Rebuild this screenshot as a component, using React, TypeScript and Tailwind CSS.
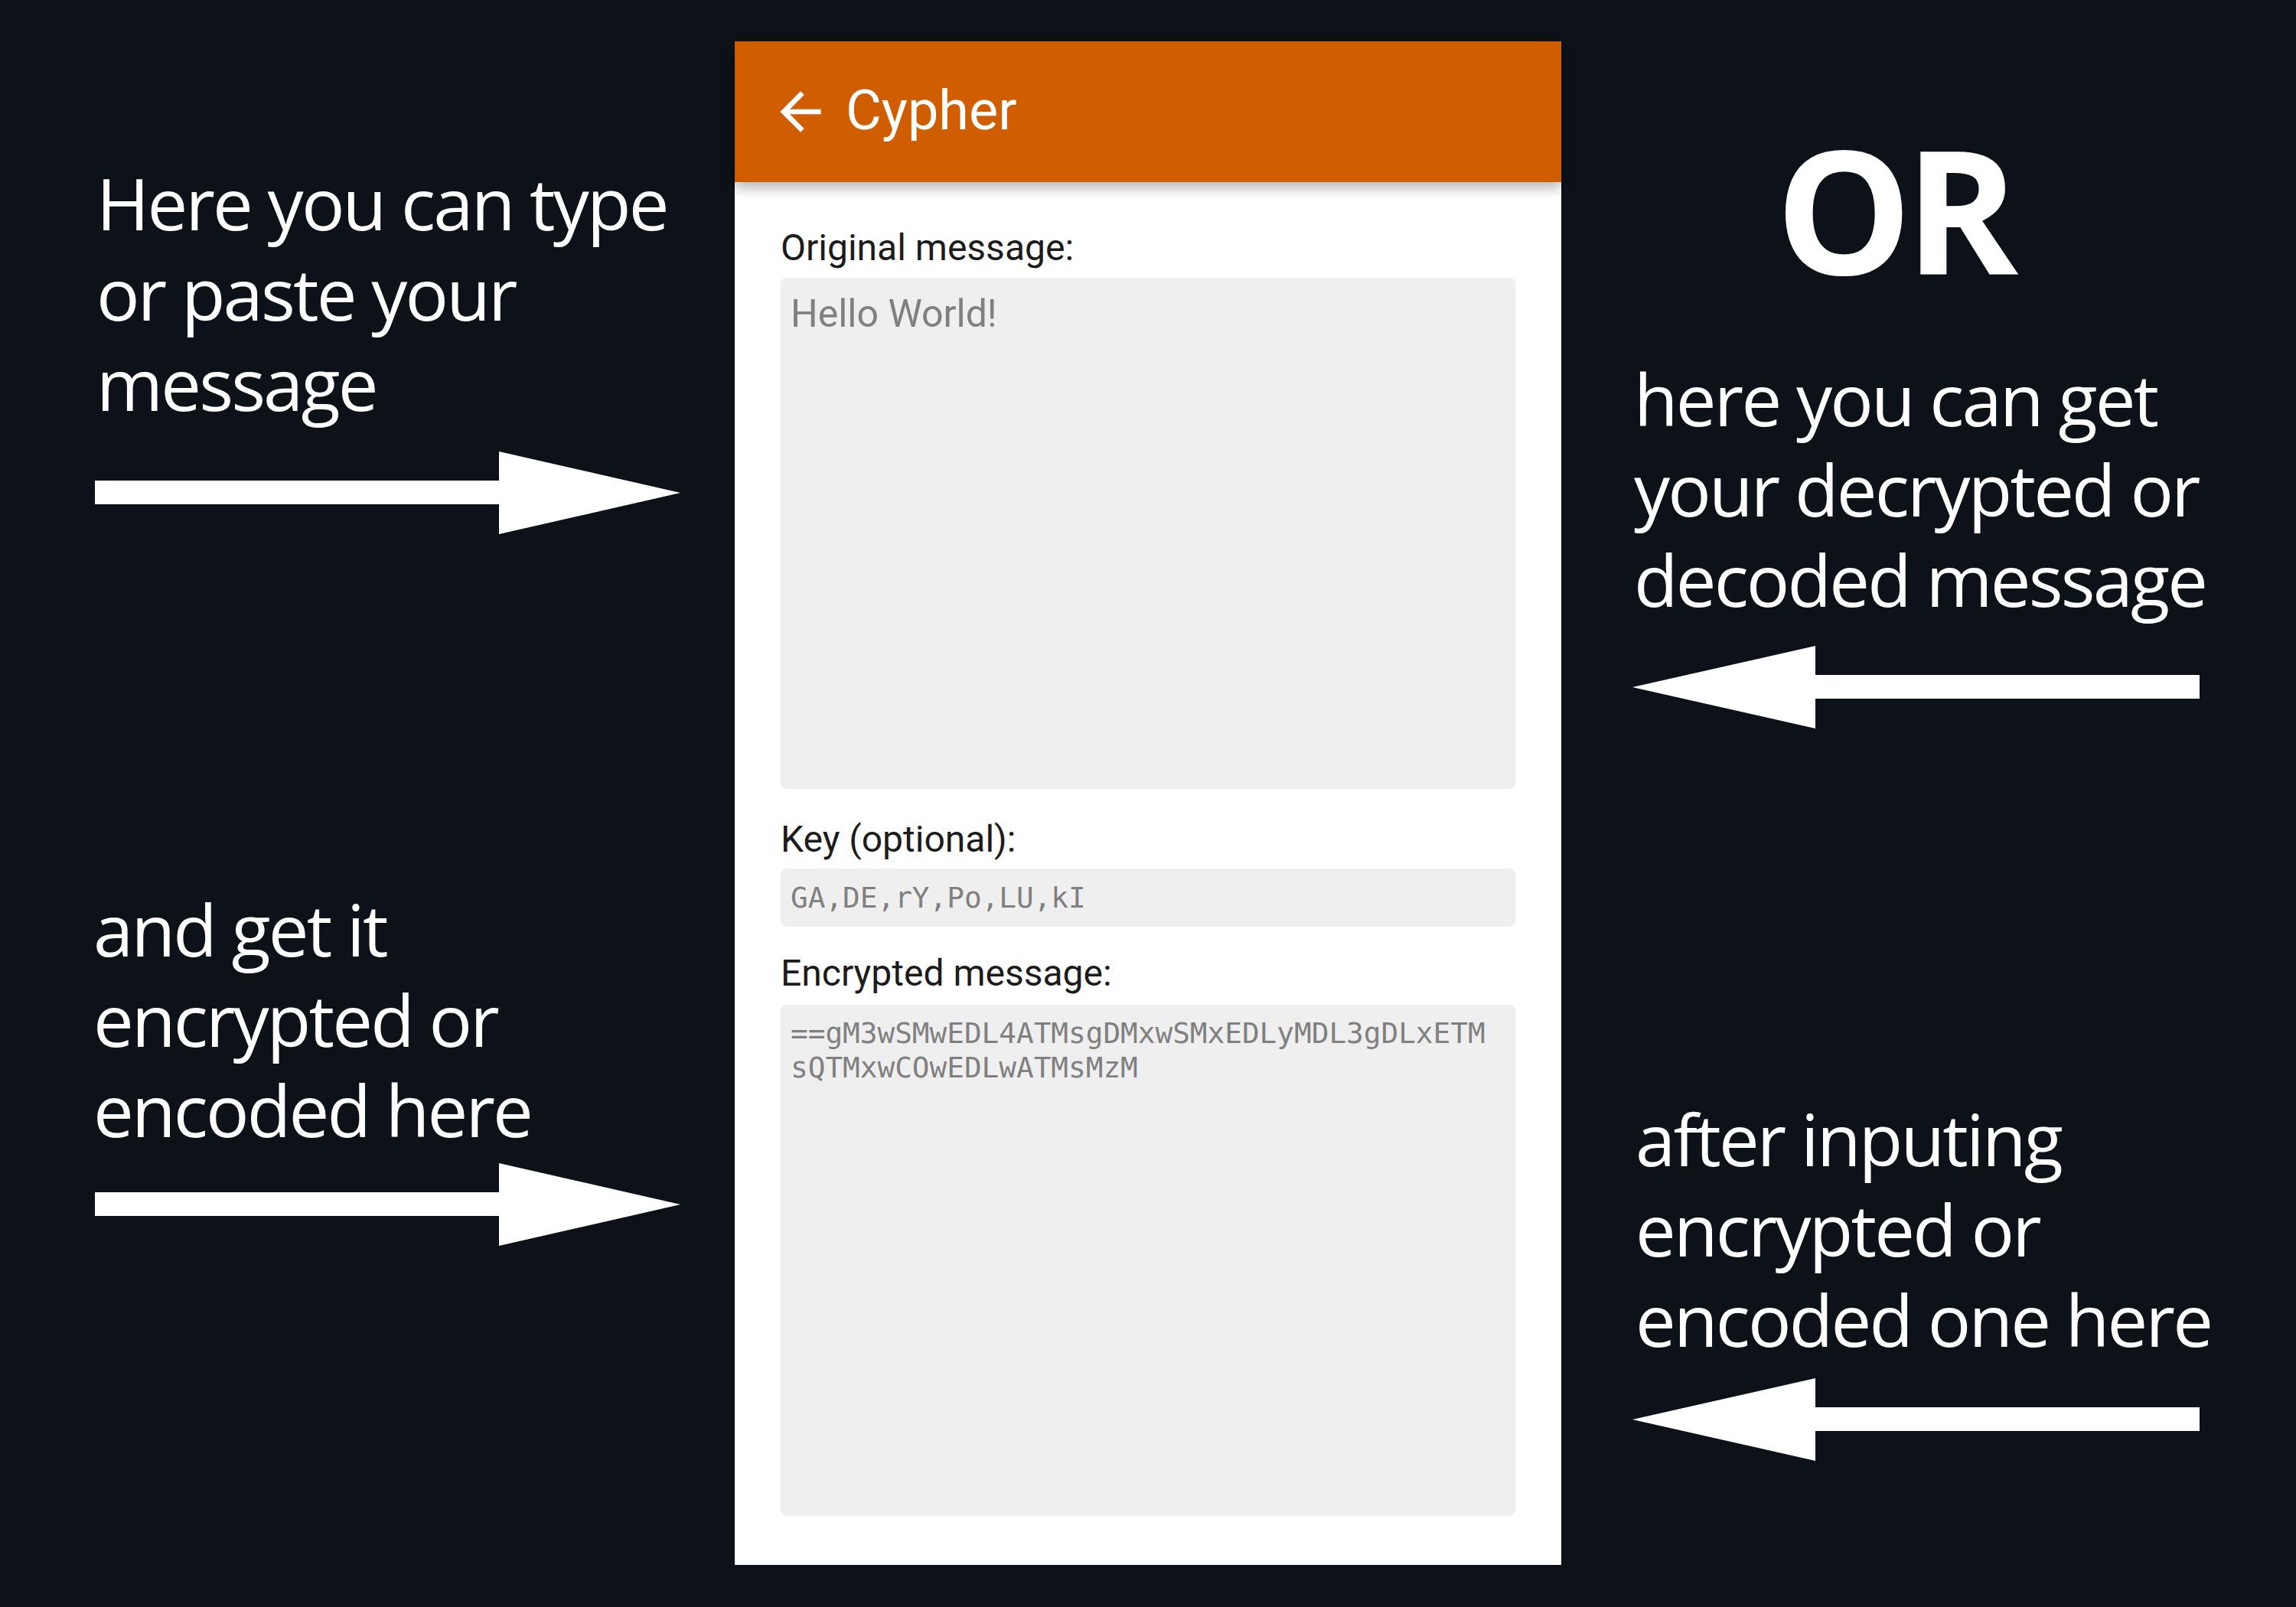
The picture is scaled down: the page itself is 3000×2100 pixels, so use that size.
import React from "react";

function ArrowRight() {
  return (
    <svg width="765" height="108" viewBox="0 0 765 108" className="block">
      <polygon points="0,38 528,38 528,0 765,54 528,108 528,69 0,69" fill="#ffffff" />
    </svg>
  );
}

function ArrowLeft() {
  return (
    <svg width="741" height="108" viewBox="0 0 741 108" className="block">
      <polygon points="0,54 239,0 239,38 741,38 741,69 239,69 239,108" fill="#ffffff" />
    </svg>
  );
}

function Note({ lines }: { lines: string[] }) {
  return (
    <div className="text-white font-['Open_Sans',sans-serif] text-[94px] leading-[118px] tracking-[-0.03em] whitespace-nowrap">
      {lines.map((l) => (
        <div key={l}>{l}</div>
      ))}
    </div>
  );
}

export default function App() {
  return (
    <div className="w-[3000px] h-[2100px] bg-[#0d1118] flex overflow-hidden">
      {/* Left annotations */}
      <div className="w-[960px] flex flex-col pl-[122px]">
        <div className="mt-[206px] ml-[4px]">
          <Note lines={["Here you can type", "or paste your", "message"]} />
        </div>
        <div className="mt-[30px] ml-[2px]">
          <ArrowRight />
        </div>
        <div className="mt-[457px]">
          <Note lines={["and get it", "encrypted or", "encoded here"]} />
        </div>
        <div className="mt-[11px] ml-[2px]">
          <ArrowRight />
        </div>
      </div>

      {/* Phone */}
      <div className="w-[1080px] h-[1991px] mt-[54px] bg-white flex flex-col font-['Roboto',sans-serif]">
        <div className="h-[184px] bg-[#d05e00] flex items-center relative z-10 shadow-[0_8px_16px_rgba(0,0,0,0.28)]">
          <svg width="80" height="80" viewBox="0 0 24 24" className="ml-[46px] shrink-0">
            <path d="M20 11H7.83l5.59-5.59L12 4l-8 8 8 8 1.41-1.41L7.83 13H20v-2z" fill="#ffffff" />
          </svg>
          <div className="ml-[19px] text-white text-[72px] leading-[84px] -mt-[2px]">Cypher</div>
        </div>
        <div className="px-[60px] flex flex-col">
          <div className="mt-[58px] text-[48px] leading-[56px] text-[#1c1c1c]">Original message:</div>
          <div className="mt-[11px] h-[668px] rounded-[8px] bg-[#efefef] pl-[13px] pt-[18px] text-[50px] leading-[58px] text-[#808080]">
            Hello World!
          </div>
          <div className="mt-[38px] text-[48px] leading-[56px] text-[#1c1c1c]">Key (optional):</div>
          <div className="mt-[10px] h-[76px] rounded-[8px] bg-[#efefef] pl-[13px] flex items-center font-['DejaVu_Sans_Mono',monospace] text-[37.7px] leading-[45px] text-[#808080]">
            GA,DE,rY,Po,LU,kI
          </div>
          <div className="mt-[33px] text-[48px] leading-[56px] text-[#1c1c1c]">Encrypted message:</div>
          <div className="mt-[13px] h-[668px] rounded-[8px] bg-[#efefef] pl-[13px] pt-[15px] font-['DejaVu_Sans_Mono',monospace] text-[37.7px] leading-[45px] text-[#808080] whitespace-nowrap">
            <div>==gM3wSMwEDL4ATMsgDMxwSMxEDLyMDL3gDLxETM</div>
            <div>sQTMxwCOwEDLwATMsMzM</div>
          </div>
        </div>
      </div>

      {/* Right annotations */}
      <div className="w-[960px] flex flex-col pl-[93px]">
        <div className="mt-[161px] ml-[187px] text-white font-['Open_Sans',sans-serif] font-bold text-[224px] leading-[224px] tracking-[-0.04em]">
          OR
        </div>
        <div className="mt-[77px] ml-[2px]">
          <Note lines={["here you can get", "your decrypted or", "decoded message"]} />
        </div>
        <div className="mt-[28px]">
          <ArrowLeft />
        </div>
        <div className="mt-[477px] ml-[4px]">
          <Note lines={["after inputing", "encrypted or", "encoded one here"]} />
        </div>
        <div className="mt-[18px]">
          <ArrowLeft />
        </div>
      </div>
    </div>
  );
}
